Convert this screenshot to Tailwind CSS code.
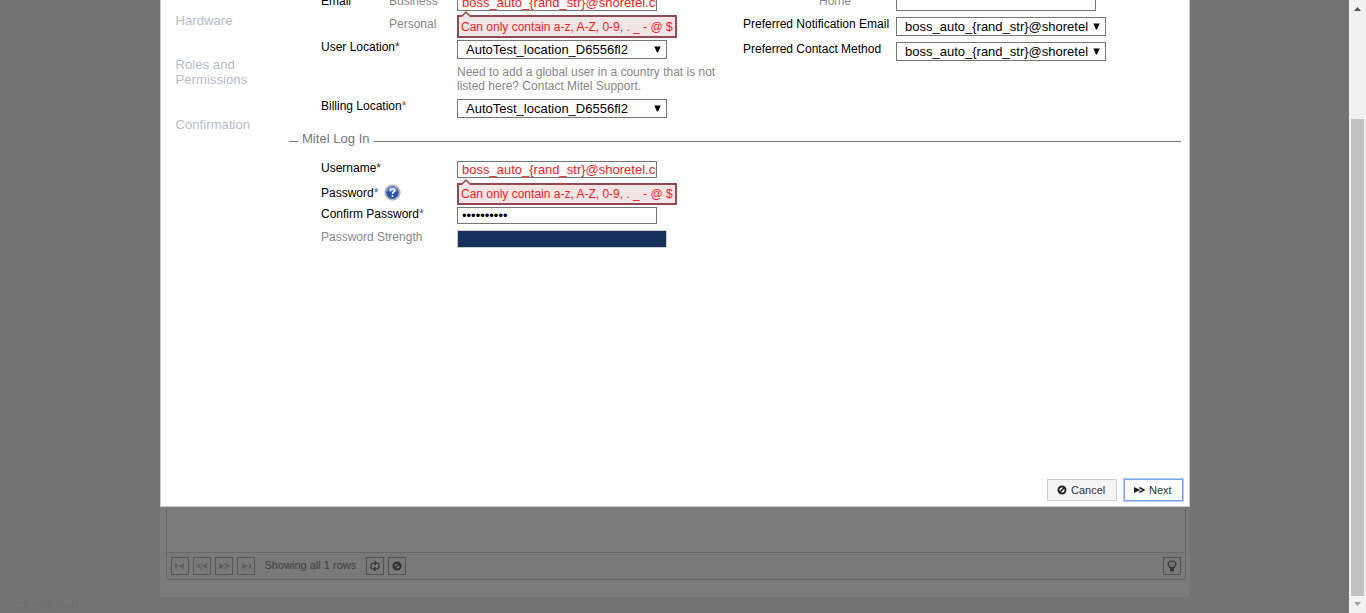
<!DOCTYPE html>
<html lang="en">
<head>
<meta charset="utf-8">
<title>Add User</title>
<script src="https://cdn.jsdelivr.net/npm/@tailwindcss/browser@4"></script>
</head>
<body class="h-[613px] overflow-hidden bg-[#737373] font-['Liberation_Sans',Arial,sans-serif] text-xs leading-4 text-black">
<svg class="hidden">
  <symbol id="ban" viewBox="0 0 10 10"><circle cx="5" cy="5" r="3.500" fill="none" stroke="currentColor" stroke-width="2"/><path d="M2.500 7.500 7.500 2.500" stroke="currentColor" stroke-width="1.700"/></symbol>
  <symbol id="down" viewBox="0 0 7 7"><path d="M.3 .5H6.700L4 6.500H3Z" fill="currentColor"/></symbol>
</svg>
<div class="relative flex h-[613px] w-[1366px] overflow-hidden">
  <div class="flex h-full w-[1349px] flex-col">
    <main class="ml-40 flex h-[597px] w-[1030px] flex-col bg-[#7b7b7b] pl-1.5 pr-[4px]">
      <div class="h-[580px] w-[1020px] border-x border-b border-[#686868]">
        <div class="h-[552px]"></div>
        <div class="flex h-[27px] items-center border-t border-[#686868] bg-[#797979] pl-1 pr-1 text-[#555]">
          <div class="flex gap-1">
            <span class="flex size-[18px] items-center justify-center border border-[#565656] text-[#606060]"><svg width="10" height="6" viewBox="0 0 10 6"><path d="M0 .5h2v5H0zM9 0v6L3 3z" fill="currentColor"/></svg></span>
            <span class="flex size-[18px] items-center justify-center border border-[#565656] text-[#606060]"><svg width="12" height="6" viewBox="0 0 12 6"><path d="M5.500 .5 1 3l4.500 2.500" fill="none" stroke="currentColor" stroke-width="1.500"/><path d="M11 0v6L5 3z" fill="currentColor"/></svg></span>
            <span class="flex size-[18px] items-center justify-center border border-[#565656] text-[#606060]"><svg width="12" height="6" viewBox="0 0 12 6"><path d="M1 0v6L7 3z" fill="currentColor"/><path d="M6.500 .5 11 3 6.500 5.500" fill="none" stroke="currentColor" stroke-width="1.500"/></svg></span>
            <span class="flex size-[18px] items-center justify-center border border-[#565656] text-[#606060]"><svg width="10" height="6" viewBox="0 0 10 6"><path d="M8 .5h2v5H8zM1 0v6L7 3z" fill="currentColor"/></svg></span>
          </div>
          <span class="-mt-0.5 ml-[9.500px] w-[101.500px] whitespace-nowrap text-[11px] text-[#3f3f3f]">Showing all 1 rows</span>
          <div class="flex gap-1 text-[#2e2e2e]">
            <span class="flex size-[18px] items-center justify-center border border-[#505050]"><svg width="10" height="12" viewBox="0 0 10 12" fill="none" stroke="currentColor" stroke-width="1.100"><path d="M6 3H3L1 4.500V8l1.500 1M4 9h3L9 7.500V4L7.500 3M4.500 .8 6.500 3 4.500 5M5.500 7l-2 2 2 2.200"/></svg></span>
            <span class="flex size-[18px] items-center justify-center border border-[#505050]"><svg width="10" height="10"><use href="#ban"/></svg></span>
          </div>
          <span class="ml-auto flex size-[18px] items-center justify-center border border-[#505050]"><svg width="10" height="12" viewBox="0 0 10 12"><path d="M2.500 6.500Q1 5.500 1 3.500Q1.500 1 5 1T9 3.500Q9 5.500 7.500 6.500V7.500h-5z" fill="#707070" stroke="#363636" stroke-width="1.200"/><path d="M3 7h4v3.500L6 11.500H4L3 10.500z" fill="#363636"/></svg></span>
        </div>
      </div>
    </main>
    <footer class="pl-4 pt-0.5 text-[11px] leading-3 text-[#707070]">18.10.1.604</footer>
  </div>
  <aside class="flex h-full w-[17px] flex-col items-center bg-[#f1f1f1]">
    <svg class="mt-[7px] shrink-0" width="7" height="4" viewBox="0 0 7 4"><path d="M0 4 3.500 0 7 4z" fill="#505050"/></svg>
    <div class="mt-[108px] h-[477px] w-[13px] shrink-0 bg-[#c1c1c1]"></div>
    <svg class="mt-1.5 shrink-0" width="7" height="4" viewBox="0 0 7 4"><path d="M0 0h7L3.500 4z" fill="#a3a3a3"/></svg>
  </aside>

  <section class="absolute left-40 top-0 flex h-[507px] w-[1030px] flex-col border-x border-b border-[#ccc] bg-white">
    <div class="flex h-[478px]">
      <nav class="flex w-[128px] shrink-0 flex-col pl-[14.5px] pt-[13px] text-[13px] leading-[15px] tracking-[0.08px] text-[#b4bccb]">
        <span>Hardware</span>
        <span class="mt-[29px]">Roles and<br>Permissions</span>
        <span class="mt-[30px]">Confirmation</span>
      </nav>
      <div class="w-[892px]">
        <div class="flex h-[131px] pl-8">
          <div class="-mt-[7px] w-[136px]">
            <div class="flex h-[23px]"><span class="w-[68px]">Email</span><span class="text-[#888]">Business</span></div>
            <div class="pl-[68px] text-[#888]">Personal</div>
            <div class="mt-[7px]">User Location<span class="text-[#333]">*</span></div>
            <div class="mt-[43px]">Billing Location<span class="text-[#a0522d]">*</span></div>
          </div>
          <div class="relative -mt-[7px] w-[286px]">
            <div class="h-[18px] w-[200px] overflow-hidden whitespace-nowrap border border-[#767676] pl-1 text-[13px] leading-[18px] text-[#ed1c24]">boss_auto_{rand_str}@shoretel.com</div>
            <div class="absolute left-0 top-[22px] h-[23px] w-[220px] whitespace-nowrap border-2 border-[#944a50] bg-[#f2e5e6] pl-0.5 text-xs leading-[20px] text-[#ed1c24]">Can only contain a-z, A-Z, 0-9, . _ - @ $
              <svg class="absolute -top-[6px] left-[2px]" width="10" height="6" viewBox="0 0 10 6"><path d="M0 6 5 1l5 5" fill="#f2e5e6" stroke="#944a50" stroke-width="1.500"/></svg></div>
            <div class="mt-[29px] flex h-[19px] w-[210px] items-center justify-between border border-[#767676] pl-2 pr-[5px] text-[13px]"><span>AutoTest_location_D6556fl2</span><svg class="-mt-px" width="7" height="7"><use href="#down"/></svg></div>
            <p class="mt-[6px] w-[270px] leading-[14px] text-[#888]">Need to add a global user in a country that is not<br>listed here? Contact Mitel Support.</p>
            <div class="mt-1.5 flex h-[19px] w-[210px] items-center justify-between border border-[#767676] pl-2 pr-[5px] text-[13px]"><span>AutoTest_location_D6556fl2</span><svg class="-mt-px" width="7" height="7"><use href="#down"/></svg></div>
          </div>
          <div class="-mt-[7px] w-[153px]">
            <div class="pl-[76px] text-[#888]">Home</div>
            <div class="mt-[7px] whitespace-nowrap">Preferred Notification Email</div>
            <div class="mt-[9px]">Preferred Contact Method</div>
          </div>
          <div class="-mt-[7px]">
            <div class="h-[18px] w-[200px] border border-[#767676]"></div>
            <div class="mt-[6px] flex h-[19px] w-[210px] items-center justify-between border border-[#767676] pl-2 pr-[5px] text-[13px]"><span>boss_auto_{rand_str}@shoretel</span><svg class="-mt-px" width="7" height="7"><use href="#down"/></svg></div>
            <div class="mt-[6px] flex h-[19px] w-[210px] items-center justify-between border border-[#767676] pl-2 pr-[5px] text-[13px]"><span>boss_auto_{rand_str}@shoretel</span><svg class="-mt-px" width="7" height="7"><use href="#down"/></svg></div>
          </div>
        </div>
        <div class="flex h-4 items-center text-[13px] text-[#777]"><span class="mt-[4px] h-px w-[9px] bg-[#777]"></span><span class="ml-1 mr-1 tracking-[0.03px]">Mitel Log In</span><span class="mt-[4px] h-px flex-1 bg-[#777]"></span></div>
        <div class="flex pl-8">
          <div class="w-[136px] pt-[13px]">
            <div>Username<span class="text-[#333]">*</span></div>
            <div class="mt-[9px] flex h-4 items-center"><span>Password<span class="text-[#36618e]">*</span></span>
              <svg class="-mt-px ml-1.5" width="17" height="17" viewBox="0 0 17 17"><circle cx="8.500" cy="8.500" r="7.600" fill="#c8c8cc" stroke="#929298" stroke-width=".8"/><circle cx="8.500" cy="8.500" r="6.300" fill="#2850b0"/><path d="M3 7a5.600 5.600 0 0 1 11 0Q8.500 9 3 7z" fill="#6788cf"/><path d="M6.300 6.800Q6.400 4.700 8.600 4.700T10.700 6.500Q10.700 7.500 9.600 8.200T8.500 10" fill="none" stroke="#fff" stroke-width="1.600"/><circle cx="8.500" cy="12" r="1" fill="#fff"/></svg></div>
            <div class="mt-[5px]">Confirm Password<span class="text-[#36618e]">*</span></div>
            <div class="mt-[7px] text-[#888]">Password Strength</div>
          </div>
          <div class="relative pt-[14px]">
            <div class="h-[17px] w-[200px] overflow-hidden whitespace-nowrap border border-[#767676] pl-1 text-[13px] leading-[16px] text-[#ed1c24]">boss_auto_{rand_str}@shoretel.com</div>
            <div class="absolute left-0 top-[36px] h-[22px] w-[220px] whitespace-nowrap border-2 border-[#944a50] bg-[#f2e5e6] pl-0.5 text-xs leading-[18px] text-[#ed1c24]">Can only contain a-z, A-Z, 0-9, . _ - @ $
              <svg class="absolute -top-[6px] left-[2px]" width="10" height="6" viewBox="0 0 10 6"><path d="M0 6 5 1l5 5" fill="#f2e5e6" stroke="#944a50" stroke-width="1.500"/></svg></div>
            <div class="mt-[29px] h-[17px] w-[200px] border border-[#767676] pl-1 text-[13px] leading-[16px]">••••••••••</div>
            <div class="mt-[6px] h-[18px] w-[210px] border border-[#ccc] bg-[#16325c]"></div>
          </div>
        </div>
      </div>
    </div>
    <div class="flex justify-end gap-[7px] pr-1.5 text-[11px] text-[#333]">
      <button class="mt-px flex h-[22px] w-[70px] items-center border border-[#ccc] bg-[#f4f4f4] pl-[9px]"><svg class="mr-1 text-[#222]" width="10" height="10"><use href="#ban"/></svg>Cancel</button>
      <button class="mt-px flex h-[22px] w-[59px] items-center border border-[#7ba3ee] bg-[#fdfdfd] pl-[9px] ring-1 ring-[#b3cdfa]"><svg class="mr-1 text-[#222]" width="11" height="6" viewBox="0 0 11 6"><path d="M0 0v6L6.500 3z" fill="currentColor"/><path d="M5.500 .5 10 3 5.500 5.500" fill="none" stroke="currentColor" stroke-width="1.600"/></svg>Next</button>
    </div>
  </section>
</div>
</body>
</html>
